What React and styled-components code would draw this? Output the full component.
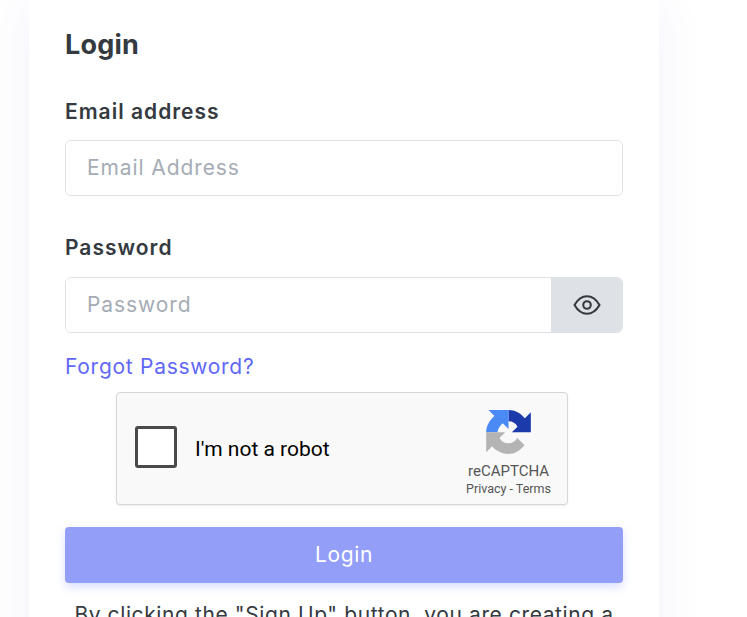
import styled, { createGlobalStyle } from "styled-components";

const GlobalStyle = createGlobalStyle`
  html, body {
    margin: 0;
    padding: 0;
    height: 617px;
    overflow: hidden;
    background: #fff;
    font-family: "Inter", "Noto Sans", "Liberation Sans", sans-serif;
  }
`;

const Page = styled.div`
  height: 617px;
  overflow: hidden;
  padding-left: 29px;
`;

const Card = styled.div`
  width: 630px;
  box-sizing: border-box;
  height: 700px;
  padding: 27px 36px 0;
  background: #fff;
  box-shadow: 0 0 45px rgba(82, 63, 205, 0.07);
`;

const Heading = styled.h1`
  margin: 0 0 35px;
  font-size: 27px;
  line-height: 36px;
  font-weight: 700;
  letter-spacing: 0.2px;
  color: #343a40;
`;

const Label = styled.label`
  display: block;
  margin-bottom: ${(p) => p.$gap}px;
  font-size: 21px;
  line-height: 28px;
  font-weight: 600;
  letter-spacing: 1px;
  color: #343a40;
`;

const Field = styled.div`
  display: flex;
  height: 56px;
  box-sizing: border-box;
  margin-bottom: ${(p) => p.$gap}px;
  border: 1px solid #dee2e6;
  border-radius: 6px;
  overflow: hidden;
`;

const Input = styled.input`
  flex: 1;
  min-width: 0;
  border: none;
  outline: none;
  padding: 0 21px 2px;
  font: inherit;
  font-size: 21px;
  letter-spacing: 0.9px;
  color: #343a40;
  background: #fff;
  &::placeholder {
    color: #a5acb5;
    opacity: 1;
  }
`;

const EyeButton = styled.button`
  width: 71px;
  border: none;
  padding: 0;
  display: flex;
  align-items: center;
  justify-content: center;
  background: #dee2e6;
  color: #343a40;
`;

const ForgotLink = styled.a`
  display: block;
  height: 28px;
  margin: 20px 0 11px;
  font-size: 21px;
  line-height: 28px;
  letter-spacing: 0.72px;
  color: #5f67f7;
  text-decoration: none;
`;

const Captcha = styled.div`
  display: flex;
  align-items: center;
  box-sizing: border-box;
  width: 452px;
  height: 113px;
  margin: 0 0 22px 51px;
  padding: 0 16px 0 18px;
  background: #f9f9f9;
  border: 1px solid #d6d6d6;
  border-radius: 4px;
  box-shadow: 0 1px 2px rgba(0, 0, 0, 0.08);
  font-family: Roboto, "Liberation Sans", sans-serif;
`;

const CheckBox = styled.div`
  width: 42px;
  height: 42px;
  margin-bottom: 3px;
  box-sizing: border-box;
  background: #fff;
  border: 3px solid #4a4a4a;
  border-radius: 3px;
`;

const CaptchaText = styled.span`
  flex: 1;
  margin-left: 18px;
  font-size: 21px;
  color: #000;
`;

const Badge = styled.div`
  display: flex;
  flex-direction: column;
  align-items: center;
  padding-top: 9px;
  color: #555;
`;

const BadgeName = styled.div`
  margin-top: 7px;
  font-size: 15px;
  line-height: 20px;
`;

const BadgeLinks = styled.div`
  font-size: 12.5px;
  line-height: 16px;
`;

const SubmitButton = styled.button`
  display: block;
  width: 100%;
  height: 56px;
  padding: 0 0 2px;
  border: none;
  border-radius: 4px;
  background: #939ef8;
  box-shadow: 0 4px 10px rgba(147, 158, 248, 0.35);
  color: #fff;
  font: inherit;
  font-size: 21px;
  letter-spacing: 0.6px;
`;

const Terms = styled.p`
  margin: 17px -10px 0;
  text-align: center;
  white-space: nowrap;
  font-size: 21px;
  line-height: 30px;
  letter-spacing: 0.6px;
  color: #343a40;
`;

const EyeIcon = () => (
  <svg width="30" height="30" viewBox="0 0 24 24" fill="none" stroke="currentColor" strokeWidth="1.7" strokeLinecap="round" strokeLinejoin="round">
    <path d="M2 12c2.6-4.5 6-7 10-7s7.4 2.5 10 7c-2.6 4.5-6 7-10 7s-7.4-2.5-10-7z" />
    <circle cx="12" cy="12" r="3" />
  </svg>
);

const CaptchaLogo = () => (
  <svg width="45" height="44" viewBox="15 13 134 132">
    <path fill="#1c3aa9" d="M82 13 C102 13 118 22 131 38 L149 20 L149 80 L92 80 L109 63 C104 53 94 47 82 47 Z" />
    <path fill="#4a8af4" d="M82 13 L82 70 L65 53 C56 60 50 70 49 80 L15 80 C15 62 25 43 40 31 L22 13 Z" />
    <path fill="#b4b4b4" d="M15 80 L72 80 L55 97 C60 107 70 113 82 113 C92 113 102 108 108 97 L130 118 C118 135 100 145 82 145 C62 145 45 136 33 122 L15 140 Z" />
  </svg>
);

export default function App() {
  return (
    <Page>
      <GlobalStyle />
      <Card>
        <Heading>Login</Heading>
        <Label $gap={14}>Email address</Label>
        <Field $gap={38}>
          <Input placeholder="Email Address" />
        </Field>
        <Label $gap={15}>Password</Label>
        <Field $gap={0}>
          <Input placeholder="Password" />
          <EyeButton>
            <EyeIcon />
          </EyeButton>
        </Field>
        <ForgotLink href="#">Forgot Password?</ForgotLink>
        <Captcha>
          <CheckBox />
          <CaptchaText>I'm not a robot</CaptchaText>
          <Badge>
            <CaptchaLogo />
            <BadgeName>reCAPTCHA</BadgeName>
            <BadgeLinks>Privacy - Terms</BadgeLinks>
          </Badge>
        </Captcha>
        <SubmitButton>Login</SubmitButton>
        <Terms>By clicking the "Sign Up" button, you are creating a</Terms>
      </Card>
    </Page>
  );
}
